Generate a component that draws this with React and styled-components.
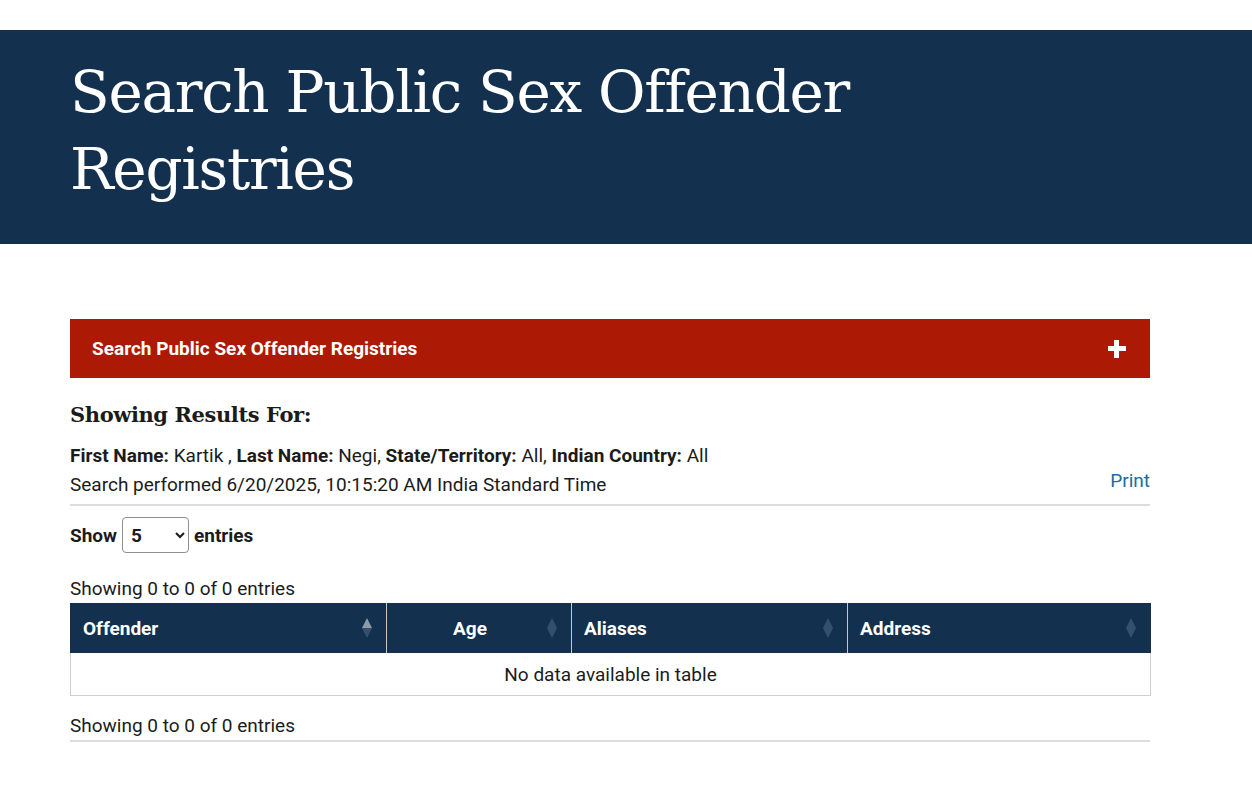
import React from "react";
import styled, { createGlobalStyle } from "styled-components";

const GlobalStyle = createGlobalStyle`
  body {
    margin: 0;
    background: #fff;
    font-family: Roboto, "Liberation Sans", sans-serif;
    color: #1b1b1b;
  }
`;

const Page = styled.div`
  padding-top: 30px;
`;

const Hero = styled.header`
  background: #13304f;
  padding: 24px 70px 36px;
`;

const Title = styled.h1`
  margin: 0;
  max-width: 820px;
  font-family: "DejaVu Serif", "Liberation Serif", serif;
  font-weight: 400;
  font-size: 58px;
  line-height: 77px;
  color: #fff;
  letter-spacing: -1.3px;
`;

const Main = styled.main`
  margin: 75px 102px 40px 70px;
`;

const Accordion = styled.div`
  display: flex;
  align-items: center;
  justify-content: space-between;
  height: 59px;
  padding: 0 22px;
  background: #ac1a05;
  color: #fff;
  font-weight: 700;
  font-size: 19px;
`;

const Plus = styled.span`
  position: relative;
  width: 20px;
  height: 20px;
  margin-right: 1px;
  &::before,
  &::after {
    content: "";
    position: absolute;
    background: #fff;
  }
  &::before {
    left: 1px;
    right: 1px;
    top: 7px;
    height: 5px;
  }
  &::after {
    top: 1px;
    bottom: 1px;
    left: 7px;
    width: 5px;
  }
`;

const ResultsTitle = styled.h2`
  margin: 23px 0 12px;
  font-family: "DejaVu Serif", "Liberation Serif", serif;
  font-weight: 700;
  font-size: 21px;
  line-height: 28px;
  letter-spacing: -0.4px;
`;

const Criteria = styled.div`
  display: flex;
  justify-content: space-between;
  align-items: flex-end;
  padding-bottom: 5px;
  border-bottom: 2px solid #dcdcdc;
  font-size: 19px;
  line-height: 29px;
`;

const PrintLink = styled.a`
  color: #1a6ca3;
  text-decoration: none;
  margin-bottom: 4px;
`;

const LengthRow = styled.div`
  display: flex;
  align-items: center;
  gap: 5px;
  margin-top: 11px;
  font-weight: 700;
  font-size: 19px;
`;

const Select = styled.select`
  width: 67px;
  height: 36px;
  padding: 0 4px;
  border: 1px solid #8f8f8f;
  border-radius: 4px;
  background: #fff;
  font-family: Roboto, sans-serif;
  font-weight: 700;
  font-size: 19px;
  color: #1b1b1b;
`;

const Info = styled.div`
  font-size: 19px;
  line-height: 28px;
  margin-top: ${(p) => p.$top}px;
  border-bottom: ${(p) => (p.$line ? "2px solid #dcdcdc" : "none")};
`;

const Table = styled.table`
  width: 100%;
  table-layout: fixed;
  border-collapse: collapse;
  font-size: 19px;
`;

const Th = styled.th`
  position: relative;
  box-sizing: border-box;
  height: 50px;
  padding: 0 30px 0 12px;
  background: #13304f;
  color: #fff;
  font-weight: 700;
  text-align: ${(p) => (p.$center ? "center" : "left")};
  border: 1px solid #c8c8c8;
  border-top: none;
  border-bottom: none;
  &:first-child {
    border-left-color: #13304f;
  }
  &:last-child {
    border-right-color: #13304f;
  }
`;

const Sort = styled.span`
  position: absolute;
  right: 14px;
  top: 50%;
  transform: translateY(-50%);
  display: flex;
  flex-direction: column;
  &::before,
  &::after {
    content: "";
    width: 0;
    height: 0;
    border-left: 5px solid transparent;
    border-right: 5px solid transparent;
  }
  &::before {
    border-bottom: 10px solid ${(p) => (p.$active ? "#8e9aa8" : "#34506f")};
  }
  &::after {
    border-top: 10px solid #34506f;
  }
`;

const EmptyCell = styled.td`
  height: 42px;
  padding: 0;
  text-align: center;
  border: 1px solid #cfcfcf;
  border-top: none;
`;

const columns = [
  { label: "Offender", width: 316, active: true },
  { label: "Age", width: 185, center: true },
  { label: "Aliases", width: 276 },
  { label: "Address", width: 303 },
];

export default function App() {
  return (
    <Page>
      <GlobalStyle />
      <Hero>
        <Title>Search Public Sex Offender Registries</Title>
      </Hero>
      <Main>
        <Accordion>
          <span>Search Public Sex Offender Registries</span>
          <Plus />
        </Accordion>

        <ResultsTitle>Showing Results For:</ResultsTitle>
        <Criteria>
          <div>
            <b>First Name:</b> Kartik , <b>Last Name:</b> Negi, <b>State/Territory:</b> All,{" "}
            <b>Indian Country:</b> All
            <br />
            Search performed 6/20/2025, 10:15:20 AM India Standard Time
          </div>
          <PrintLink href="#">Print</PrintLink>
        </Criteria>

        <LengthRow>
          Show
          <Select defaultValue="5">
            <option>5</option>
            <option>10</option>
            <option>25</option>
          </Select>
          entries
        </LengthRow>

        <Info $top={22}>Showing 0 to 0 of 0 entries</Info>
        <Table>
          <thead>
            <tr>
              {columns.map((c) => (
                <Th key={c.label} $center={c.center} style={{ width: c.width }}>
                  {c.label}
                  <Sort $active={c.active} />
                </Th>
              ))}
            </tr>
          </thead>
          <tbody>
            <tr>
              <EmptyCell colSpan={4}>No data available in table</EmptyCell>
            </tr>
          </tbody>
        </Table>
        <Info $top={16} $line>
          Showing 0 to 0 of 0 entries
        </Info>
      </Main>
    </Page>
  );
}
